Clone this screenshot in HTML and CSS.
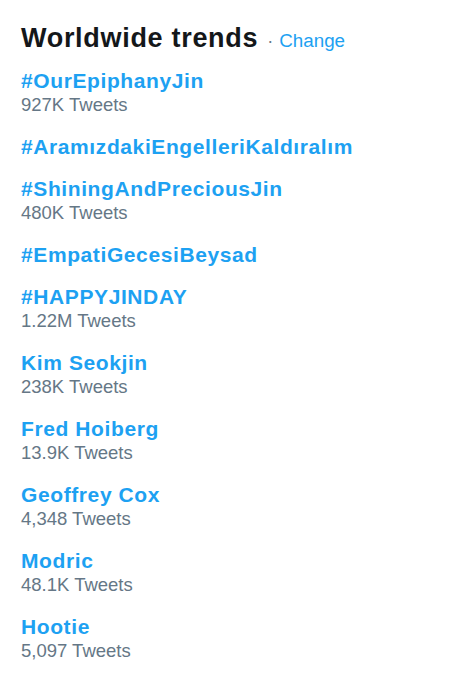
FILE: index.html
```html
<!DOCTYPE html>
<html>
<head>
<meta charset="utf-8">
<link rel="stylesheet" href="styles.css">
</head>
<body>
<div class="trends">
  <div class="header">
    <h2 class="title">Worldwide trends</h2>
    <span class="dot">·</span>
    <a class="change">Change</a>
  </div>
  <ul class="list">
    <li class="item"><a class="name">#OurEpiphanyJin</a><div class="count">927K Tweets</div></li>
    <li class="item"><a class="name">#AramızdakiEngelleriKaldıralım</a></li>
    <li class="item"><a class="name">#ShiningAndPreciousJin</a><div class="count">480K Tweets</div></li>
    <li class="item"><a class="name">#EmpatiGecesiBeysad</a></li>
    <li class="item"><a class="name">#HAPPYJINDAY</a><div class="count">1.22M Tweets</div></li>
    <li class="item"><a class="name">Kim Seokjin</a><div class="count">238K Tweets</div></li>
    <li class="item"><a class="name">Fred Hoiberg</a><div class="count">13.9K Tweets</div></li>
    <li class="item"><a class="name">Geoffrey Cox</a><div class="count">4,348 Tweets</div></li>
    <li class="item"><a class="name">Modric</a><div class="count">48.1K Tweets</div></li>
    <li class="item"><a class="name">Hootie</a><div class="count">5,097 Tweets</div></li>
  </ul>
</div>
</body>
</html>
```
FILE: styles.css
```css
html, body {
  margin: 0;
  padding: 0;
  background: #ffffff;
}
body {
  font-family: "Liberation Sans", Arial, sans-serif;
}
.trends {
  padding: 22px 0 0 21px;
}
.header {
  display: flex;
  align-items: baseline;
  height: 32px;
  line-height: 32px;
}
.title {
  margin: 0;
  font-size: 27px;
  font-weight: bold;
  letter-spacing: 0.7px;
  color: #14171a;
}
.dot {
  margin: 0 6px 0 9px;
  font-size: 18px;
  color: #657786;
}
.change {
  font-size: 18.8px;
  color: #1da1f2;
}
.list {
  list-style: none;
  margin: 15px 0 0 0;
  padding: 0;
}
.item {
  margin-bottom: 19px;
}
.name {
  display: block;
  font-size: 21px;
  font-weight: bold;
  letter-spacing: 0.6px;
  line-height: 23px;
  color: #1da1f2;
}
.count {
  padding-top: 1px;
  font-size: 18.5px;
  line-height: 23px;
  color: #657786;
}
```
